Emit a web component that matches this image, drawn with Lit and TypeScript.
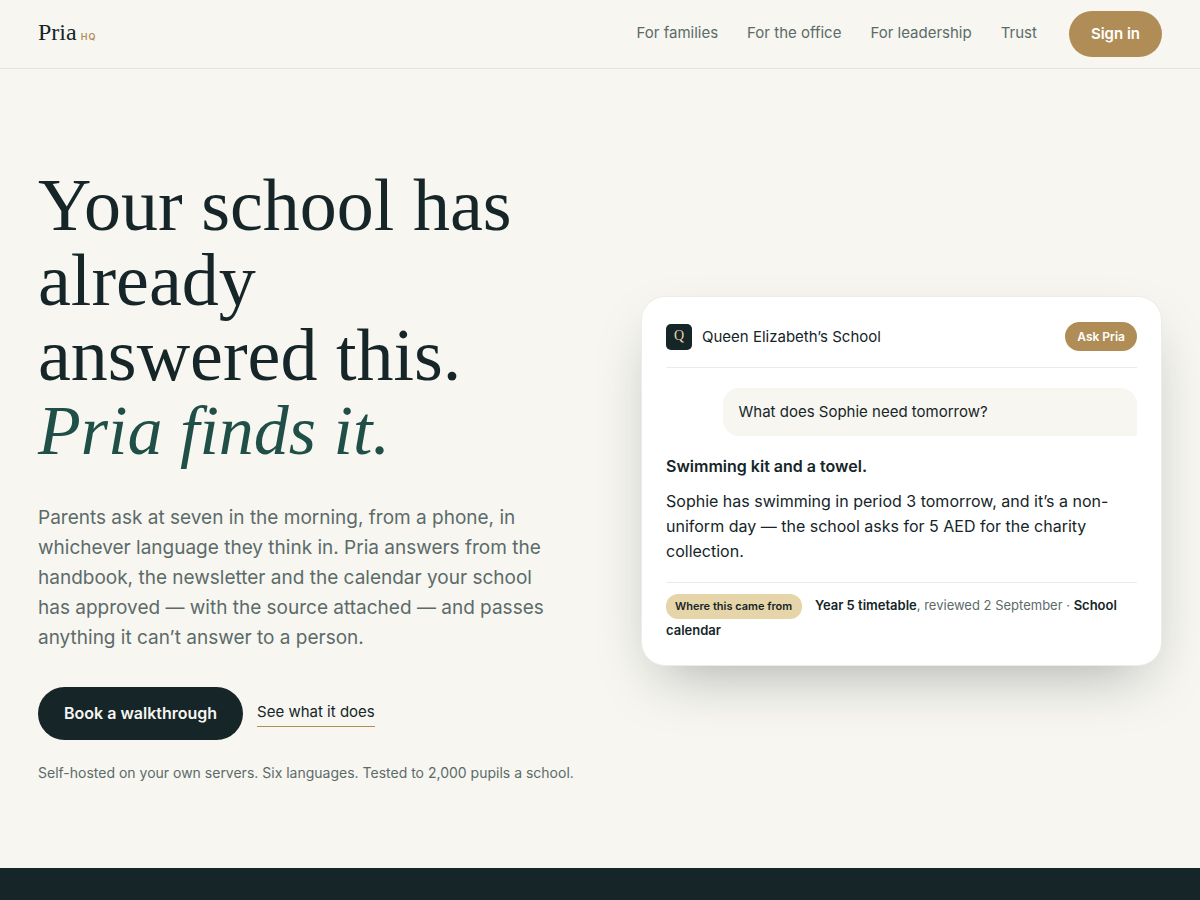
import { LitElement, html, css } from "lit";
import { customElement } from "lit/decorators.js";

const NAV = ["For families", "For the office", "For leadership", "Trust"];

@customElement("pria-header")
class PriaHeader extends LitElement {
  static styles = css`
    :host {
      display: block;
      border-bottom: 1px solid #e3e4de;
    }
    .bar {
      display: flex;
      align-items: center;
      justify-content: space-between;
      padding: 11px 38px;
    }
    .brand {
      display: flex;
      align-items: baseline;
      gap: 4px;
      padding-bottom: 4px;
      color: #152528;
      text-decoration: none;
      font: 24px/30px "Liberation Serif", serif;
    }
    .suffix {
      font: 600 9px/12px Inter, sans-serif;
      letter-spacing: 1px;
      color: #b08d57;
    }
    .nav {
      display: flex;
      align-items: center;
      gap: 29px;
      font-size: 15px;
      line-height: 24px;
    }
    .link {
      padding-bottom: 2px;
      color: #5c6b69;
      text-decoration: none;
    }
    .signin {
      margin-left: 3px;
      padding: 11px 22px;
      border-radius: 23px;
      background: #b08d57;
      color: #fff;
      font-weight: 600;
      text-decoration: none;
    }
  `;

  render() {
    return html`
      <header class="bar">
        <a class="brand" href="#">Pria<span class="suffix">HQ</span></a>
        <nav class="nav">
          ${NAV.map((label) => html`<a class="link" href="#">${label}</a>`)}
          <a class="signin" href="#">Sign in</a>
        </nav>
      </header>
    `;
  }
}

@customElement("answer-card")
class AnswerCard extends LitElement {
  static styles = css`
    :host {
      display: block;
      min-width: 0;
    }
    .card {
      padding: 25px 24px 23px;
      border: 1px solid #ecece8;
      border-radius: 24px;
      background: #fff;
      color: #152528;
      font-size: 16px;
      line-height: 25px;
      box-shadow: 0 24px 60px -20px rgba(21, 37, 40, 0.36);
    }
    .top {
      display: flex;
      align-items: center;
      gap: 10px;
      padding-bottom: 16px;
      border-bottom: 1px solid #ebece9;
      font-size: 15px;
    }
    .crest {
      width: 26px;
      height: 26px;
      border-radius: 5px;
      background: #152528;
      color: #e5d5a8;
      text-align: center;
      font: 14px/24px "Liberation Serif", serif;
    }
    .ask {
      margin-left: auto;
      padding: 0 12px;
      border: 0;
      border-radius: 15px;
      background: #b08d57;
      color: #fff;
      font: 600 12px/29px Inter, sans-serif;
    }
    .question {
      margin: 20px 0 18px 12%;
      padding: 11px 16px 12px;
      border-radius: 16px 16px 3px 16px;
      background: #f7f6f1;
      font-size: 15px;
    }
    .headline {
      margin: 0 0 10px;
      font-size: 16px;
      font-weight: 600;
    }
    .body {
      margin: 0 0 18px;
    }
    .source {
      margin: 0;
      padding-top: 10px;
      border-top: 1px solid #ebece9;
      color: #5c6b69;
      font-size: 13px;
      line-height: 24px;
    }
    .source b {
      color: #152528;
      font-weight: 600;
    }
    .tag {
      margin-right: 9px;
      padding: 5px 10px 6px 9px;
      border-radius: 12px;
      background: #e5d5a8;
      color: #152528;
      font-size: 11px;
      font-weight: 600;
    }
  `;

  render() {
    return html`
      <article class="card">
        <div class="top">
          <span class="crest">Q</span>
          <span>Queen Elizabeth’s School</span>
          <button class="ask" type="button">Ask Pria</button>
        </div>
        <div class="question">What does Sophie need tomorrow?</div>
        <h2 class="headline">Swimming kit and a towel.</h2>
        <p class="body">
          Sophie has swimming in period 3 tomorrow, and it’s a non-uniform day — the school asks
          for 5 AED for the charity collection.
        </p>
        <p class="source">
          <span class="tag">Where this came from</span>
          <b>Year 5 timetable</b>, reviewed 2 September · <b>School calendar</b>
        </p>
      </article>
    `;
  }
}

@customElement("app-root")
class AppRoot extends LitElement {
  static styles = css`
    :host {
      display: flex;
      flex-direction: column;
      min-height: 100vh;
      background: #f7f6f1;
      color: #152528;
      font-family: Inter, sans-serif;
    }
    .hero {
      display: grid;
      grid-template-columns: 1.05fr 1fr;
      align-items: center;
      gap: 56px;
      padding: 99px 38px 74px;
    }
    .title {
      max-width: 500px;
      margin: 0 0 35px;
      font: 74px/75px "Liberation Serif", serif;
    }
    .title em {
      display: block;
      color: #1f4f46;
      font-size: 70px;
    }
    .lede {
      max-width: 520px;
      margin: 0 0 34px;
      color: #5c6b69;
      font-size: 19px;
      line-height: 30px;
    }
    .actions {
      display: flex;
      align-items: center;
      gap: 14px;
      margin-bottom: 22px;
      font-size: 16px;
      line-height: 25px;
    }
    .primary {
      padding: 14px 26px;
      border-radius: 27px;
      background: #152528;
      color: #f7f6f1;
      font-weight: 600;
      text-decoration: none;
    }
    .secondary {
      padding-bottom: 2px;
      border-bottom: 1px solid #b08d57;
      color: #152528;
      font-size: 15px;
      line-height: 24px;
      text-decoration: none;
    }
    .note {
      margin: 0 0 10px;
      color: #5c6b69;
      font-size: 14px;
      line-height: 22px;
    }
    .band {
      flex: 1;
      background: #152528;
    }
    @media (max-width: 900px) {
      .hero {
        grid-template-columns: 1fr;
      }
    }
  `;

  render() {
    return html`
      <pria-header></pria-header>
      <main class="hero">
        <section>
          <h1 class="title">Your school has already answered this. <em>Pria finds it.</em></h1>
          <p class="lede">
            Parents ask at seven in the morning, from a phone, in whichever language they think in.
            Pria answers from the handbook, the newsletter and the calendar your school has
            approved — with the source attached — and passes anything it can’t answer to a person.
          </p>
          <div class="actions">
            <a class="primary" href="#">Book a walkthrough</a>
            <a class="secondary" href="#">See what it does</a>
          </div>
          <p class="note">
            Self-hosted on your own servers. Six languages. Tested to 2,000 pupils a school.
          </p>
        </section>
        <answer-card></answer-card>
      </main>
      <div class="band"></div>
    `;
  }
}
